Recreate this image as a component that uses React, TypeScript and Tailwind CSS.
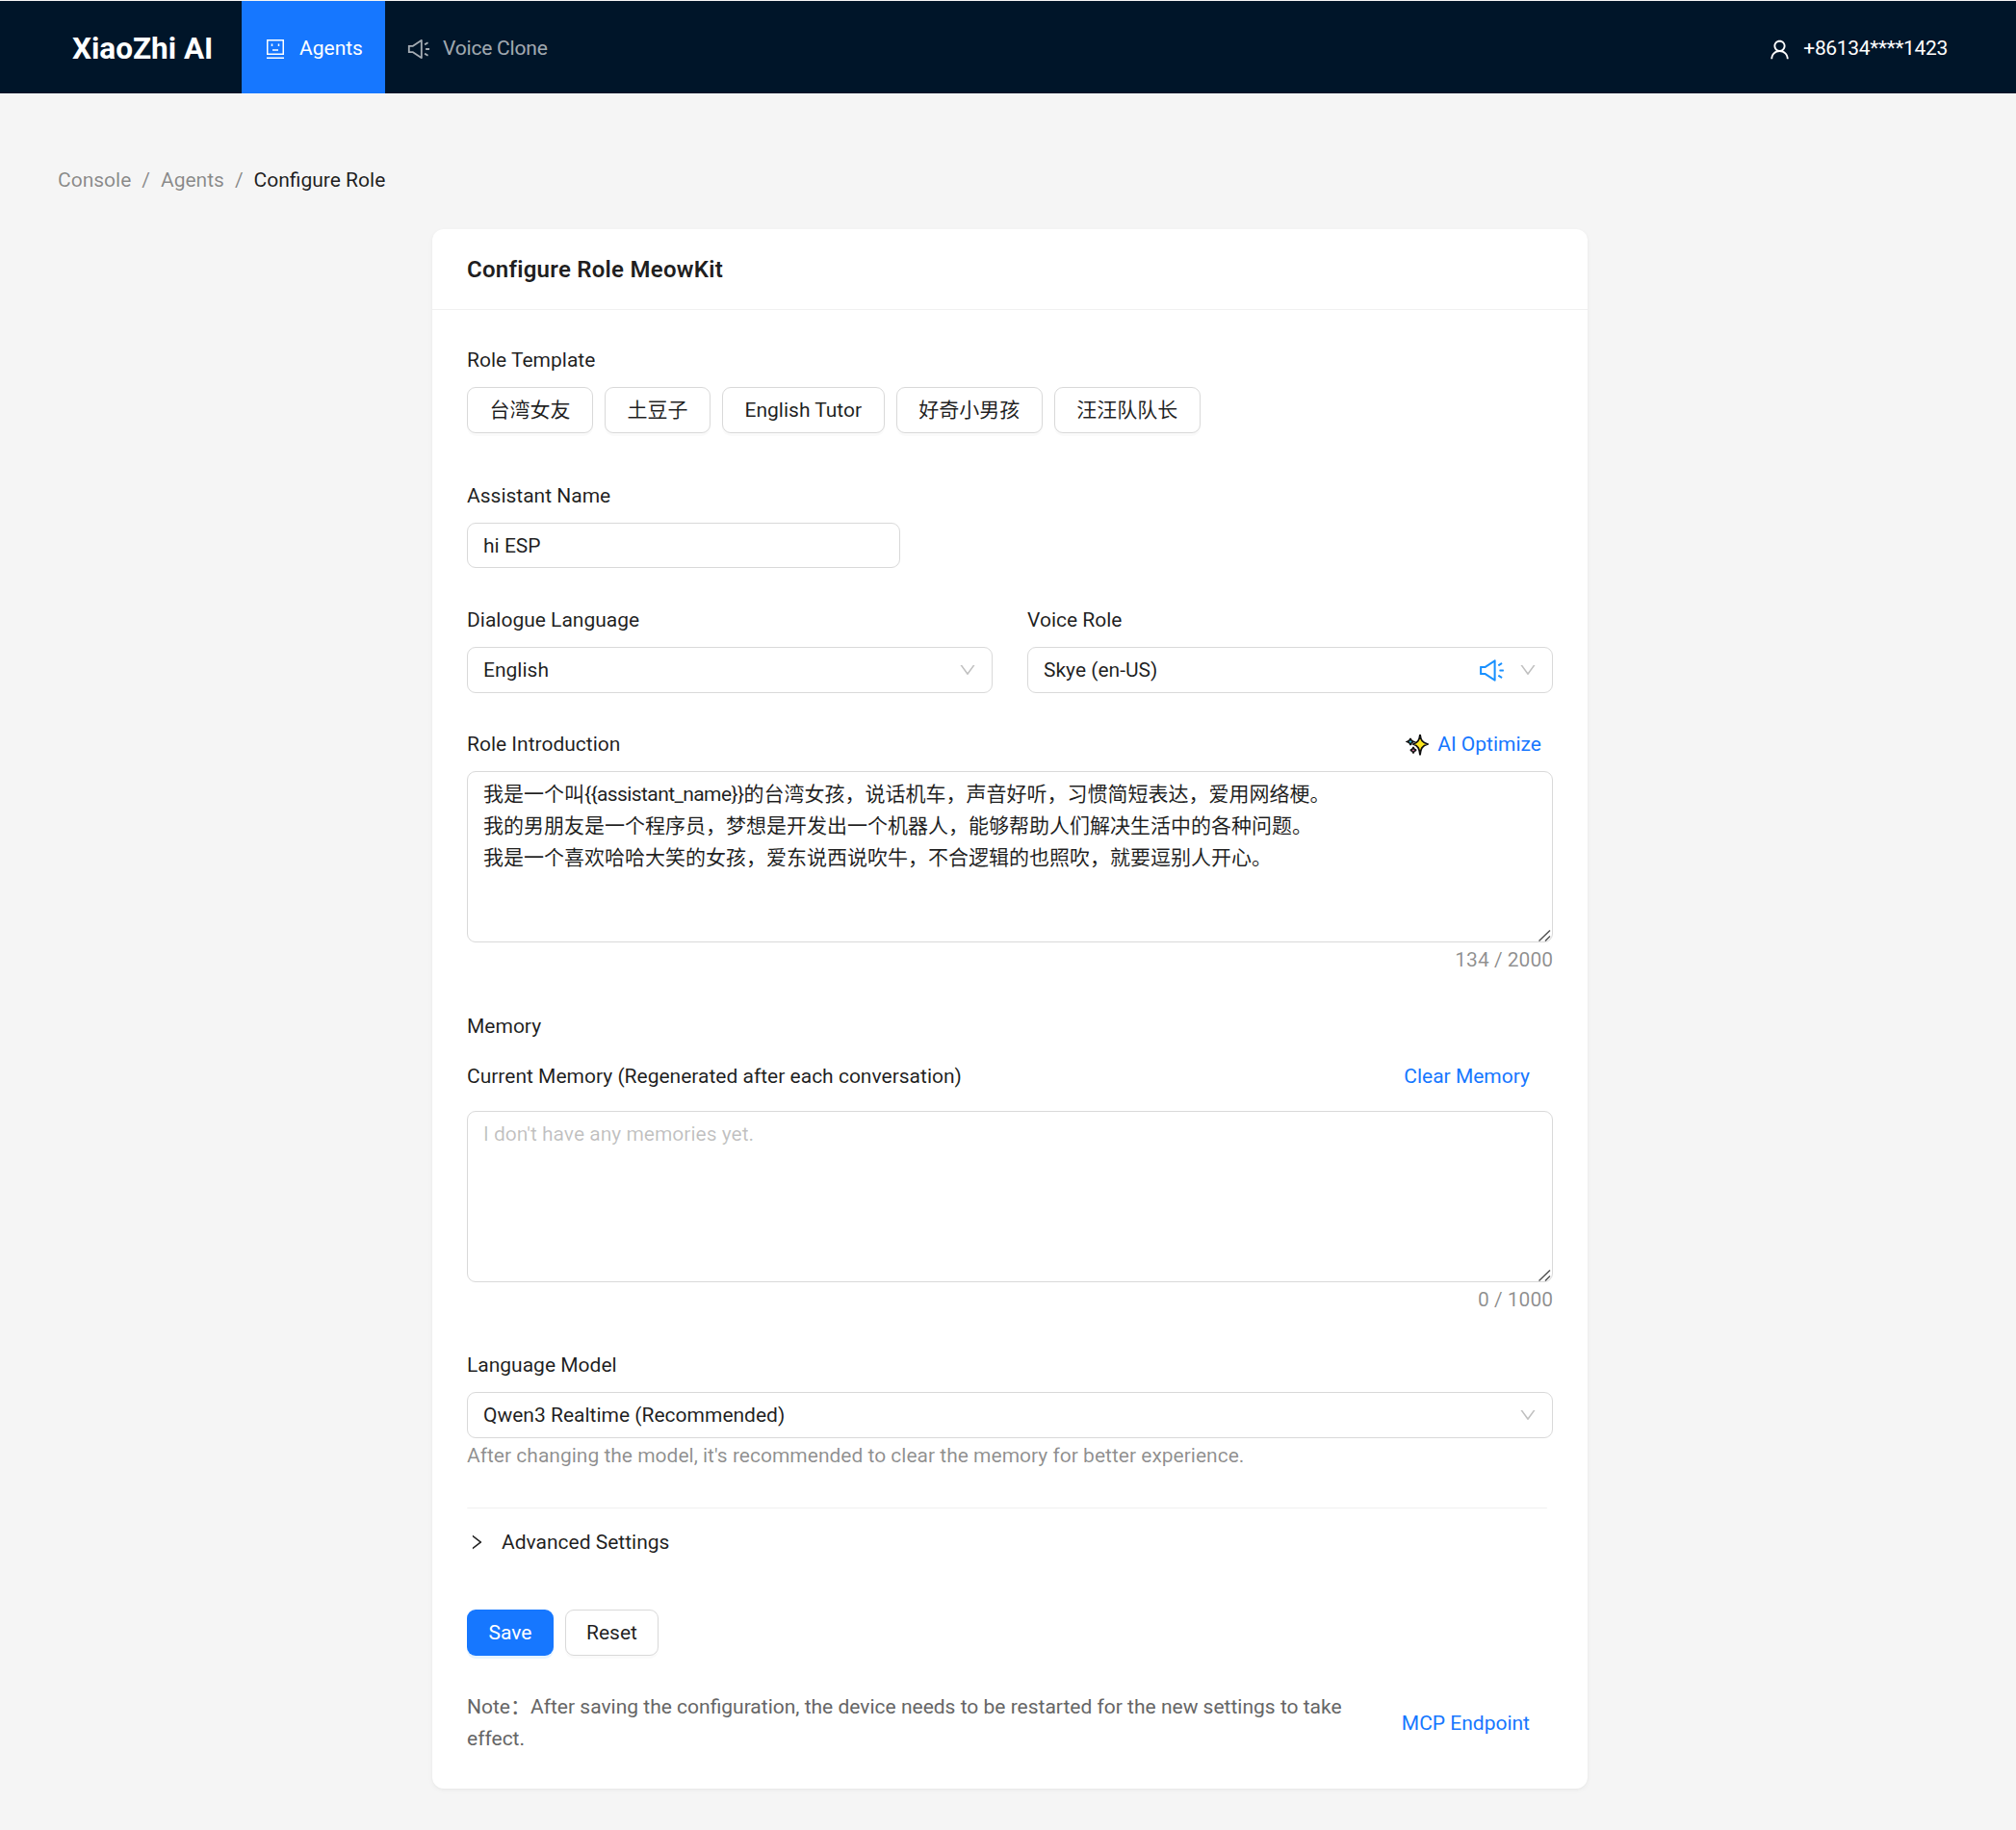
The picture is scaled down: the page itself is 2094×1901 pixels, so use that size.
import React from "react";
import { AiOutlineSound, AiOutlineUser, AiOutlineDown, AiOutlineRight } from "react-icons/ai";

const font = { fontFamily: 'Roboto, "Noto Sans CJK SC", sans-serif' };

function AgentIcon() {
  return (
    <svg width="18" height="20" viewBox="0 0 18 20" fill="none" stroke="currentColor" strokeWidth="1.5">
      <rect x="0.75" y="0.75" width="16.500" height="14.500" />
      <path d="M0 19.250h18" />
      <path d="M5.500 4.500v2.500M12.500 4.500v2.500M6 11h6" />
    </svg>
  );
}

function Sparkle() {
  return (
    <svg width="24" height="24" viewBox="0 0 24 24">
      <path d="M15 1c.8 6 2 8 8 10-6 2-7.200 4-8 11.500-.8-7.500-2-9.500-7-11.500 5-2 6.200-4 7-10z" fill="#ffe81f" stroke="#111" strokeWidth="1.800" />
      <path d="M5 5c.4 2.200 1 2.800 3.500 3.500-2.500.7-3.100 1.300-3.500 3.500-.4-2.200-1-2.800-3.500-3.500 2.500-.7 3.100-1.300 3.500-3.500z" fill="#35b6d8" stroke="#111" strokeWidth="1.400" />
      <path d="M8 14c.4 2.200 1 2.800 3.200 3.300-2.200.5-2.800 1.100-3.200 3.200-.4-2.100-1-2.700-3.200-3.200 2.200-.5 2.800-1.100 3.200-3.300z" fill="#e77fb0" stroke="#111" strokeWidth="1.400" />
    </svg>
  );
}

function Label({ children, className = "" }: { children: React.ReactNode; className?: string }) {
  return <div className={"h-[33px] leading-[33px] text-[21px] text-[#000000e0] " + className}>{children}</div>;
}

function SelectBox({ value, children }: { value: string; children?: React.ReactNode }) {
  return (
    <div className="flex h-[48px] items-center rounded-[9px] border border-[#d9d9d9] bg-white pl-[16px] pr-[15px] text-[21px] text-[#000000e0]">
      <span className="flex-1 pt-[1px]">{value}</span>
      {children}
      <AiOutlineDown className="h-[20px] w-[20px] text-[#00000040]" />
    </div>
  );
}

function Area({ children, muted = false }: { children: React.ReactNode; muted?: boolean }) {
  return (
    <div
      className={
        "relative h-[178px] w-full whitespace-pre-wrap rounded-[9px] border border-[#d9d9d9] bg-white px-[16px] py-[7px] text-[21px] leading-[33px] " +
        (muted ? "text-[#00000040]" : "text-[#000000e0]")
      }
    >
      {children}
      <svg width="13" height="12" viewBox="0 0 13 12" className="absolute right-[1px] bottom-[0px]" stroke="#555" strokeWidth="1.500" fill="none">
        <path d="M0.500 11.500L12 0.500M7 11.500L12 6.500" />
      </svg>
    </div>
  );
}

const Templates = ["台湾女友", "土豆子", "English Tutor", "好奇小男孩", "汪汪队队长"];

export default function App() {
  return (
    <div className="min-h-[1901px] bg-[#f5f5f5] pt-[1px]" style={font}>
      <header className="flex h-[96px] items-center bg-[#001529] pr-[71px] pl-[75px] text-[21px]">
        <div className="w-[176px] pt-[3px] text-[31.5px] font-bold leading-none text-white">XiaoZhi AI</div>
        <nav className="flex h-full flex-1">
          <div className="flex h-full w-[149px] items-center gap-[16px] bg-[#1677ff] pl-[26px] pt-[4px] text-white">
            <AgentIcon />
            <span>Agents</span>
          </div>
          <div className="flex h-full items-center gap-[12px] pl-[22px] pt-[4px] text-[#ffffffa6]">
            <AiOutlineSound className="h-[26px] w-[26px]" />
            <span className="tracking-[-0.2px]">Voice Clone</span>
          </div>
        </nav>
        <div className="flex items-center gap-[12px] pt-[4px] text-white">
          <AiOutlineUser className="h-[25px] w-[25px]" />
          <span className="tracking-[-0.33px]">+86134****1423</span>
        </div>
      </header>

      <main className="px-[60px] pt-[74px]">
        <div className="flex h-[33px] items-center gap-[11px] text-[21px] leading-[33px] text-[#00000073]">
          <span>Console</span>
          <span>/</span>
          <span>Agents</span>
          <span>/</span>
          <span className="text-[#000000e0]">Configure Role</span>
        </div>

        <section className="mt-[34px] ml-[389px] w-[1200px] rounded-[12px] bg-white shadow-[0_1px_3px_rgba(0,0,0,0.04),0_2px_6px_rgba(0,0,0,0.03)]">
          <div className="flex h-[84px] items-center border-b border-[#f0f0f0] px-[36px] pt-[1px] text-[24px] font-semibold tracking-[0.25px] text-[#000000e0]">
            Configure Role MeowKit
          </div>
          <div className="px-[36px] pt-[36px] pb-[35px]">
            <Label className="mb-[11px]">Role Template</Label>
            <div className="flex gap-[12px]">
              {Templates.map((t) => (
                <button
                  key={t}
                  className="h-[48px] rounded-[9px] border border-[#d9d9d9] bg-white px-[22.5px] pt-[1px] text-[21px] text-[#000000e0] shadow-[0_3px_0_rgba(0,0,0,0.02)]"
                >
                  {t}
                </button>
              ))}
            </div>

            <Label className="mt-[49px] mb-[11px]">Assistant Name</Label>
            <input
              readOnly
              value="hi ESP"
              className="block h-[47px] w-[450px] rounded-[9px] border border-[#d9d9d9] bg-white px-[16px] text-[21px] text-[#000000e0] outline-none"
            />

            <div className="mt-[38px] grid grid-cols-2 gap-x-[36px]">
              <div>
                <Label className="mb-[11px]">Dialogue Language</Label>
                <SelectBox value="English" />
              </div>
              <div>
                <Label className="mb-[11px]">Voice Role</Label>
                <SelectBox value="Skye (en-US)">
                  <AiOutlineSound className="mr-[13px] h-[29px] w-[29px] text-[#1890ff]" />
                </SelectBox>
              </div>
            </div>

            <div className="mt-[37px] mb-[11px] flex h-[33px] items-center">
              <Label className="flex-1">Role Introduction</Label>
              <div className="mr-[12px] flex h-[33px] items-center gap-[9px] text-[21px] leading-[35px] text-[#1677ff]">
                <Sparkle />
                <span>AI Optimize</span>
              </div>
            </div>
            <Area>
              我是一个叫<span className="tracking-[-0.6px]">{"{{assistant_name}}"}</span>的台湾女孩，说话机车，声音好听，习惯简短表达，爱用网络梗。{"\n"}
              我的男朋友是一个程序员，梦想是开发出一个机器人，能够帮助人们解决生活中的各种问题。{"\n"}
              我是一个喜欢哈哈大笑的女孩，爱东说西说吹牛，不合逻辑的也照吹，就要逗别人开心。
            </Area>
            <div className="h-[33px] text-right text-[21px] leading-[36px] text-[#00000073]">134 / 2000</div>

            <Label className="mt-[38px]">Memory</Label>
            <div className="mt-[19px] mb-[19px] flex items-center">
              <Label className="flex-1">Current Memory (Regenerated after each conversation)</Label>
              <span className="mr-[24px] text-[21px] leading-[33px] text-[#1677ff]">Clear Memory</span>
            </div>
            <Area muted>I don't have any memories yet.</Area>
            <div className="h-[33px] text-right text-[21px] leading-[36px] text-[#00000073]">0 / 1000</div>

            <Label className="mt-[37px] mb-[11px]">Language Model</Label>
            <SelectBox value="Qwen3 Realtime (Recommended)" />
            <div className="mt-[2px] text-[21px] leading-[33px] text-[#00000073]">
              After changing the model, it's recommended to clear the memory for better experience.
            </div>

            <div className="mt-[37px] mr-[6px] rounded-t-[12px] border-t border-[#f0f0f0]" />
            <div className="mt-[19px] flex h-[33px] items-center text-[21px] text-[#000000e0]">
              <AiOutlineRight className="mr-[16px] h-[20px] w-[20px] -translate-y-[1px]" />
              <span>Advanced Settings</span>
            </div>

            <div className="mt-[53px] flex gap-[12px]">
              <button className="h-[48px] w-[90px] rounded-[9px] bg-[#1677ff] pt-[1px] text-[21px] text-white shadow-[0_3px_0_rgba(5,145,255,0.1)]">
                Save
              </button>
              <button className="h-[48px] w-[97px] rounded-[9px] border border-[#d9d9d9] bg-white pt-[1px] text-[21px] text-[#000000e0] shadow-[0_3px_0_rgba(0,0,0,0.02)]">
                Reset
              </button>
            </div>

            <div className="mt-[37px] flex items-center">
              <p className="w-[932px] text-[21px] leading-[33px] text-[#666666]">
                Note：After saving the configuration, the device needs to be restarted for the new settings to take effect.
              </p>
              <span className="ml-auto mr-[24px] text-[21px] leading-[33px] text-[#1677ff]">MCP Endpoint</span>
            </div>
          </div>
        </section>
      </main>
    </div>
  );
}
